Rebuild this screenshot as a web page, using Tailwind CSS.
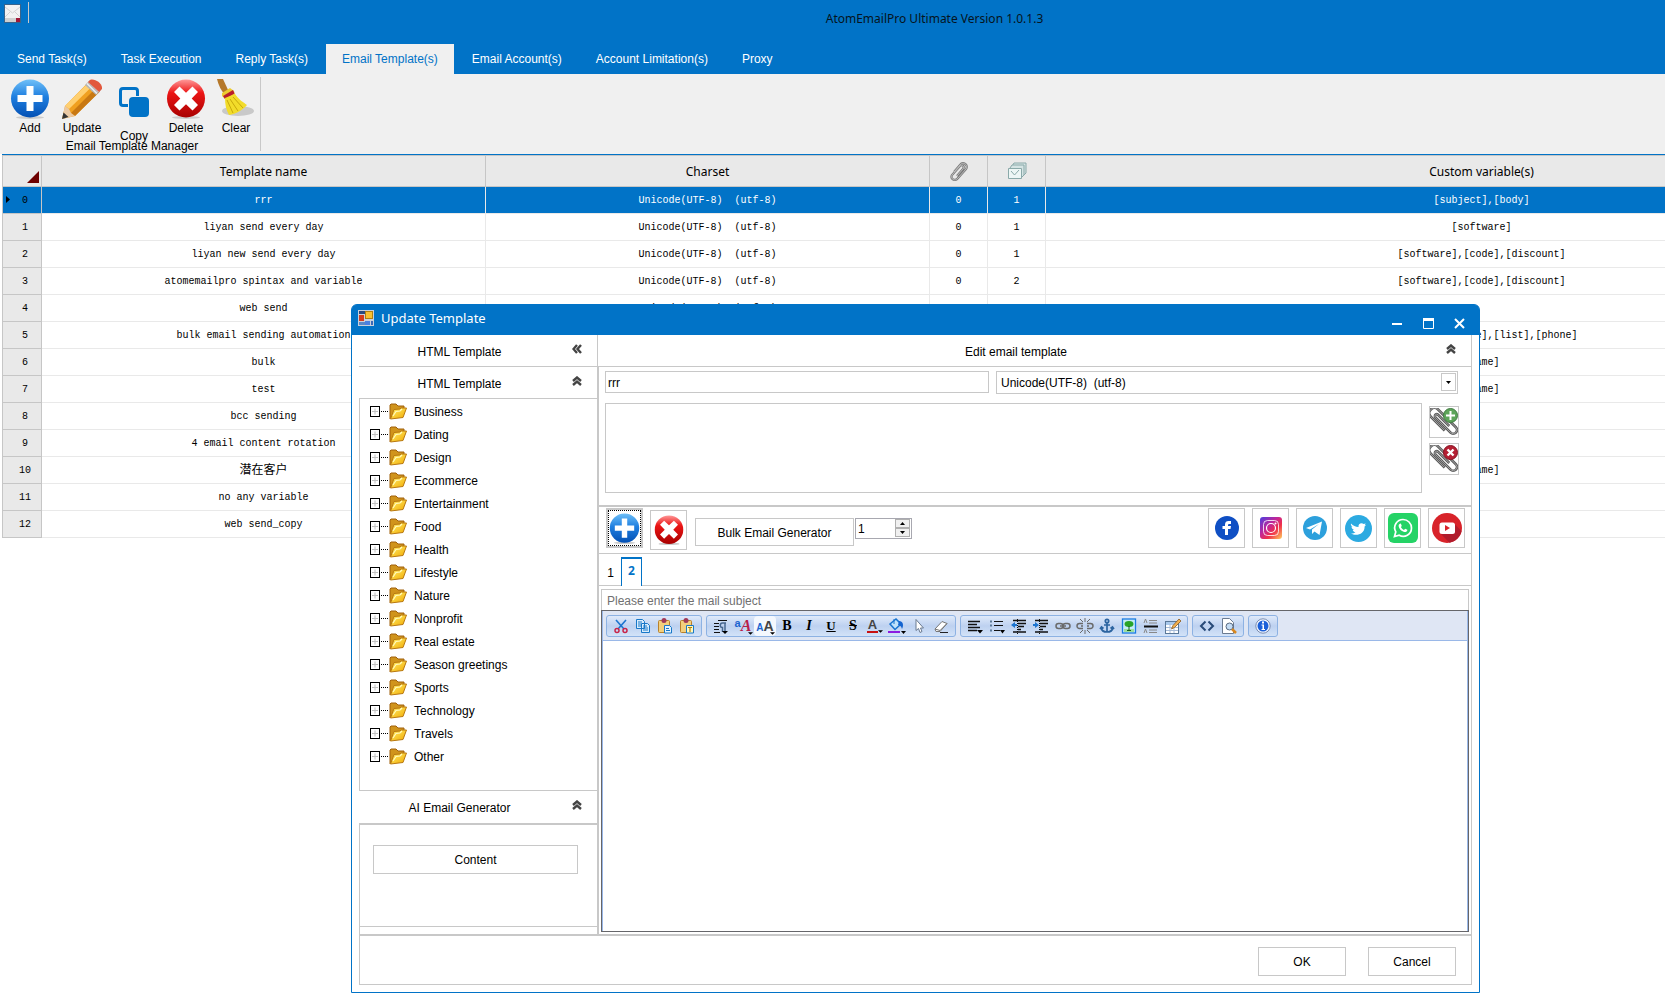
<!DOCTYPE html>
<html lang="en">
<head>
  <meta charset="UTF-8">
  <meta name="viewport" content="width=device-width, initial-scale=1.0">
  <title>AtomEmailPro Ultimate Version 1.0.1.3</title>
  <script src="https://cdn.jsdelivr.net/npm/@tailwindcss/browser@4"></script>
</head>
<body class="bg-white font-['Liberation_Sans',Arial,sans-serif] text-xs text-black">
  <!-- Shared icons -->
  <svg class="absolute size-0" aria-hidden="true">
    <defs>
      <linearGradient id="blue" x1="0" y1="0" x2="0" y2="1"><stop offset="0" stop-color="#6fc0f8"/><stop offset=".45" stop-color="#1f7fe0"/><stop offset="1" stop-color="#0450b4"/></linearGradient>
      <linearGradient id="red" x1="0" y1="0" x2="0" y2="1"><stop offset="0" stop-color="#f99"/><stop offset=".35" stop-color="#ec1515"/><stop offset="1" stop-color="#a80000"/></linearGradient>
      <linearGradient id="gold" x1="0" y1="0" x2="1" y2="1"><stop offset="0" stop-color="#fff06a"/><stop offset="1" stop-color="#f2a800"/></linearGradient>
      <linearGradient id="insta" x1="0" y1="0" x2="1" y2="1"><stop offset="0" stop-color="#4a3fe0"/><stop offset=".4" stop-color="#c0269a"/><stop offset=".65" stop-color="#f0304a"/><stop offset="1" stop-color="#ffd060"/></linearGradient>
    </defs>
    <symbol id="i-add" viewBox="0 0 40 40">
      <ellipse cx="20" cy="38.500" rx="14" ry="1.500" fill="#ccc"/>
      <circle cx="20" cy="19.500" r="19" fill="url(#blue)"/>
      <path d="M16.500 7h7v9h9v7h-9v9h-7v-9h-9v-7h9z" fill="#fff"/>
    </symbol>
    <symbol id="i-delete" viewBox="0 0 40 40">
      <ellipse cx="20" cy="38.500" rx="14" ry="1.500" fill="#ccc"/>
      <circle cx="20" cy="19.500" r="19" fill="url(#red)"/>
      <path d="M13.500 7.500l6.500 6.300 6.500-6.300 5.500 5.500-6.300 6.500L32 26l-5.500 5.500-6.500-6.300-6.500 6.300L8 26l6.300-6.500L8 13z" fill="#fff"/>
    </symbol>
    <symbol id="i-folder" viewBox="0 0 18 17">
      <path d="M1 16V2l1-1h5l2 2h6v3" fill="#d0941c" stroke="#a0600c"/>
      <path d="M1.500 16L5 6.500l6-.5 1-1h5.500L14 14.500z" fill="url(#gold)" stroke="#b87810"/>
      <path d="M4 13l3-4.500 4-.5 2-2" stroke="#fffbc0" stroke-width="1.200" fill="none"/>
    </symbol>
    <symbol id="i-clip" viewBox="0 0 30 30">
      <g transform="rotate(45 15 15)" fill="none">
        <path d="M22 21H1a5.500 5.500 0 010-11h27a4 4 0 010 8H5a2 2 0 010-4h17" stroke="#5a5a5a" stroke-width="2.800"/>
        <path d="M22 21H1a5.500 5.500 0 010-11h27a4 4 0 010 8H5a2 2 0 010-4h17" stroke="#a5a5a5"/>
      </g>
    </symbol>
    <symbol id="i-up" viewBox="0 0 10 10">
      <path d="M1 5l4-3.500L9 5M1 9l4-3.500L9 9" fill="none" stroke="#444" stroke-width="2.400"/>
    </symbol>
  </svg>

  <div class="relative flex h-screen min-h-[700px] flex-col overflow-hidden">
    <!-- Title bar -->
    <header class="bg-[#0173c7]">
      <div class="flex h-11 items-start">
        <svg class="mt-1 ml-1 h-[19px] w-[17px]" viewBox="0 0 17 19"><rect width="17" height="19" fill="#38648c"/><rect x="1" y="1" width="15" height="17" fill="#f2f2f2"/><path d="M1 3l7.500 6L16 3M1 13l5-5m10 5l-5-5" stroke="#d2d2d2" fill="none"/><path d="M1 14h11v4H1z" fill="#cfcfcf"/><path d="M12 14h4v4h-4z" fill="#a01838"/></svg>
        <div class="mt-[2px] ml-[7px] h-[21px] w-px bg-[#c8c8c8]"></div>
        <h1 class="grow pt-[11px] pl-[175px] text-center font-['Noto_Sans',sans-serif] text-xs text-[#061420]">AtomEmailPro Ultimate Version 1.0.1.3</h1>
      </div>
      <nav class="flex h-[30px] gap-[2px] pl-px text-white">
        <a href="#send" class="px-4 pt-[7px]">Send Task(s)</a>
        <a href="#execution" class="px-4 pt-[7px]">Task Execution</a>
        <a href="#reply" class="px-4 pt-[7px]">Reply Task(s)</a>
        <a href="#templates" class="bg-[#f0f0f0] px-4 pt-[7px] text-[#0173c7]">Email Template(s)</a>
        <a href="#accounts" class="px-4 pt-[7px]">Email Account(s)</a>
        <a href="#limitations" class="px-4 pt-[7px]">Account Limitation(s)</a>
        <a href="#proxy" class="px-4 pt-[7px]">Proxy</a>
      </nav>
    </header>

    <!-- Ribbon -->
    <div class="flex h-20 bg-[#f0f0f0]">
      <div class="pl-1">
        <div class="flex h-16 items-start">
          <button type="button" class="flex w-[52px] flex-col items-center gap-px pt-[5px]">
            <svg class="size-10"><use href="#i-add"/></svg>
            Add
          </button>
          <button type="button" class="flex w-[52px] flex-col items-center gap-px pt-[5px]">
            <svg class="size-10" viewBox="0 0 40 40">
              <path d="M0 40l3-13L27 2.500 38 12 13 37z" fill="#f0a020"/>
              <path d="M3 27L27 3l4 3.500L7 30z" fill="#ffd071"/>
              <path d="M9 34L34 9l4 3.500L13 37z" fill="#c87812"/>
              <path d="M0 40l3-13 4 3 2 4 4 3z" fill="#eac9a4"/><path d="M0 40l1.500-6.500L6.500 38z" fill="#333"/>
              <path d="M23 6l5-5 11 10-5 5z" fill="#b5b5b5"/><path d="M25 4.500l10 10M27 2.500l10 10" stroke="#eee" stroke-width="1.500"/>
              <path d="M28 1c5-2 13 4 12 9l-3 3L26 3z" fill="#e2583c"/>
            </svg>
            Update
          </button>
          <button type="button" class="flex w-[52px] flex-col items-center gap-[11px] pt-[13px]">
            <svg class="size-[30px]" viewBox="0 0 30 30"><rect x="1.500" y="1.500" width="17" height="17" rx="2.500" fill="none" stroke="#0173c7" stroke-width="3"/><rect x="9" y="9" width="21" height="21" rx="4" fill="#f0f0f0"/><rect x="10" y="10" width="20" height="20" rx="4" fill="#0173c7"/></svg>
            Copy
          </button>
          <button type="button" class="flex w-[52px] flex-col items-center gap-px pt-[5px]">
            <svg class="size-10"><use href="#i-delete"/></svg>
            Delete
          </button>
          <button type="button" class="flex w-12 flex-col items-center gap-px pt-[5px]">
            <svg class="size-10" viewBox="0 0 40 40">
              <ellipse cx="22" cy="32" rx="16" ry="5" fill="#c9c9c9"/>
              <path d="M1 0h6l6 13-4 3Q3 9 1 0z" fill="#b5782a"/>
              <path d="M6 14l8-5 4 3 1 4-10 4-3-3z" fill="#eccb30"/>
              <path d="M7 17l10-6 1.500 3.500L9 20z" fill="#b81c2c"/>
              <path d="M9 19l10-4c4 6 8 8 12 11-4 5-11 9-18 10-3-5-4-11-4-17z" fill="#f2dc2a"/>
              <path d="M11 21l6 13m-3-14l8 12m-5-14l10 11" stroke="#c8a80c" fill="none"/>
            </svg>
            Clear
          </button>
        </div>
        <div class="text-center">Email Template Manager</div>
      </div>
      <div class="my-[3px] w-px bg-[#c8c8c8]"></div>
    </div>

    <!-- Template grid -->
    <div class="ml-[2px] grow overflow-hidden border-t border-[#0173c7]">
      <table class="w-[1916px] table-fixed border-separate border-spacing-0 border-l border-[#c6c6c6] text-center">
        <thead class="font-['Noto_Sans',sans-serif]">
          <tr class="h-8 bg-[#e9e9e9]">
            <th class="w-[39px] border-y border-r border-[#c6c6c6] p-0">
              <svg class="mt-3 ml-6 size-3" viewBox="0 0 12 12"><path d="M12 0v12H0z" fill="#6e0000"/></svg>
            </th>
            <th class="w-[444px] border-y border-r border-[#c6c6c6] p-0 pt-[2px] font-normal">Template name</th>
            <th class="w-[444px] border-y border-r border-[#c6c6c6] p-0 pt-[2px] font-normal">Charset</th>
            <th class="w-[58px] border-y border-r border-[#c6c6c6] p-0">
              <svg class="mx-auto size-5" viewBox="0 0 20 20" fill="none"><path d="M5 11l6-7c3-4 9 0 6 4l-8 9c-3 4-8 1-6-3l8-9c2-2 5 0 3 3l-6 7" stroke="#777" stroke-width="2.200"/><path d="M5 11l6-7c3-4 9 0 6 4l-8 9c-3 4-8 1-6-3l8-9c2-2 5 0 3 3l-6 7" stroke="#ccc" stroke-width=".8"/></svg>
            </th>
            <th class="w-[58px] border-y border-r border-[#c6c6c6] p-0">
              <svg class="mx-auto size-5" viewBox="0 0 20 20"><path d="M5 5l2-3h12v10l-3 3" fill="#d5e4e4" stroke="#8aa9a9"/><path d="M3 7l2-3h12v10l-3 3" fill="#d5e4e4" stroke="#8aa9a9"/><path d="M1.500 7.500h13v10h-13z" fill="#edf6f5" stroke="#8aa9a9"/><path d="M4 10l3.500 4L12 9" fill="none" stroke="#8aa9a9"/></svg>
            </th>
            <th class="border-y border-r border-[#c6c6c6] p-0 pt-[2px] font-normal">Custom variable(s)</th>
          </tr>
        </thead>
        <tbody id="template-rows" class="font-['Liberation_Mono','Noto_Sans_CJK_SC',monospace] text-[10px]"></tbody>
      </table>
    </div>

    <!-- Update Template dialog -->
    <div role="dialog" aria-labelledby="dialog-title" class="absolute top-[304px] right-[185px] bottom-[2px] left-[351px] flex flex-col rounded-t-md border border-[#0173c7] bg-white">
      <div class="flex h-[30px] items-center rounded-t-sm bg-[#0173c7] pr-[14px] pl-[6px] text-white">
        <svg class="mb-1 size-4" viewBox="0 0 16 16"><rect width="16" height="16" fill="#c8d0dc"/><path d="M1 1h6v3H1z" fill="#284a80"/><path d="M1 12h6v3H1z" fill="#5a88c8"/><rect x="1" y="5" width="5" height="6" fill="#d43c1c"/><rect x="7.500" y="1.500" width="7" height="7" fill="#f8c030" stroke="#b08010"/><rect x="7" y="11" width="5" height="4" fill="#4a80e0"/><path d="M13 11h2v4h-2z" fill="#3a68b8"/></svg>
        <h2 id="dialog-title" class="grow pb-[2px] pl-[7px] font-['Noto_Sans',sans-serif] text-[13px]">Update Template</h2>
        <div class="flex gap-5 pt-[6px]">
          <button type="button" aria-label="Minimize"><svg class="size-[11px]" viewBox="0 0 11 11"><path d="M0 6h10" stroke="#fff" stroke-width="2"/></svg></button>
          <button type="button" aria-label="Maximize"><svg class="size-[11px]" viewBox="0 0 11 11"><path d="M.5 1v9.500h10V1" fill="none" stroke="#fff"/><path d="M0 1.500h11" stroke="#fff" stroke-width="3"/></svg></button>
          <button type="button" aria-label="Close"><svg class="size-[11px]" viewBox="0 0 11 11"><path d="M1 1l9 9M10 1l-9 9" stroke="#fff" stroke-width="2"/></svg></button>
        </div>
      </div>

      <div class="flex min-h-0 grow pr-[7px] pl-[7px]">
        <!-- Left panel -->
        <aside class="flex w-[238px] shrink-0 flex-col">
          <div class="flex h-8 shrink-0 items-center border-b border-[#c8c8c8] pr-[15px]">
            <span class="grow pt-[2px] pr-3 text-center">HTML Template</span>
            <svg class="mb-1 size-[10px] -rotate-90"><use href="#i-up"/></svg>
          </div>
          <div class="flex h-8 shrink-0 items-center border-b border-[#c8c8c8] pr-[15px]">
            <span class="grow pt-[2px] pr-3 text-center">HTML Template</span>
            <svg class="mb-1 size-[10px]"><use href="#i-up"/></svg>
          </div>
          <ul id="category-tree" class="min-h-0 grow overflow-hidden border-b border-l border-[#c8c8c8] pt-px pl-[10px]"></ul>
          <div class="flex h-[34px] shrink-0 items-center border-b-2 border-[#c8c8c8] pr-[15px]">
            <span class="grow pt-[2px] pr-3 text-center">AI Email Generator</span>
            <svg class="mb-1 size-[10px]"><use href="#i-up"/></svg>
          </div>
          <div class="h-[102px] shrink-0 border-b border-l border-[#c8c8c8] pt-5 pr-[19px] pl-[13px]">
            <button type="button" class="h-[29px] w-full border border-[#c8c8c8]">Content</button>
          </div>
          <div class="h-[7px] shrink-0 border-l border-[#c8c8c8]"></div>
        </aside>

        <!-- Right panel -->
        <main class="flex min-w-0 grow flex-col border-r border-l border-[#c8c8c8]">
          <div class="flex h-8 shrink-0 items-center border-b border-[#c8c8c8] pr-[15px]">
            <span class="grow pt-[2px] pr-3 text-center">Edit email template</span>
            <svg class="mb-1 size-[10px]"><use href="#i-up"/></svg>
          </div>

          <div class="flex min-h-0 grow flex-col border-l border-[#c8c8c8]">
            <div class="flex gap-[7px] pt-1 pr-[13px] pl-[6px]">
              <input type="text" aria-label="Template name" value="rrr" class="h-[22px] w-[384px] border border-[#c8c8c8] px-[2px] pt-px">
              <div class="relative grow">
                <select aria-label="Charset" class="h-[23px] w-full appearance-none border border-[#c8c8c8] bg-white px-1">
                  <option>Unicode(UTF-8)&nbsp; (utf-8)</option>
                </select>
                <svg class="pointer-events-none absolute top-[2px] right-[2px] h-[18px] w-[15px] border border-[#c8c8c8] bg-white" viewBox="0 0 13 16"><path d="M4 7h5L6.500 10z"/></svg>
              </div>
            </div>

            <div class="flex gap-[7px] border-b-2 border-[#c8c8c8] pt-[9px] pr-3 pb-3 pl-[6px]">
              <div class="h-[90px] grow border border-[#c8c8c8]"></div>
              <div class="flex flex-col gap-[5px] pt-[3px]">
                <button type="button" aria-label="Add attachment" class="relative h-8 w-[30px] border border-[#c8c8c8]">
                  <svg class="size-7"><use href="#i-clip"/></svg>
                  <svg class="absolute top-px right-0 size-[15px]" viewBox="0 0 15 15"><circle cx="7.500" cy="7.500" r="7" fill="#5da55a" stroke="#3f7a40"/><path d="M7.500 3v9M3 7.500h9" stroke="#fff" stroke-width="2"/></svg>
                </button>
                <button type="button" aria-label="Remove attachment" class="relative h-8 w-[30px] border border-[#c8c8c8]">
                  <svg class="size-7"><use href="#i-clip"/></svg>
                  <svg class="absolute top-px right-0 size-[15px]" viewBox="0 0 15 15"><circle cx="7.500" cy="7.500" r="7" fill="#b51f33" stroke="#841020"/><path d="M4.500 4.500l6 6m0-6l-6 6" stroke="#fff" stroke-width="2.400"/></svg>
                </button>
              </div>
            </div>

            <div class="flex h-[47px] shrink-0 items-start border-b border-[#c8c8c8] pt-px pr-[6px] pl-[7px]">
              <button type="button" aria-label="Add content" class="h-10 w-[37px] border-2 border-[#c8c8c8]">
                <span class="flex size-full items-center justify-center border border-dotted border-black"><svg class="size-[31px]"><use href="#i-add"/></svg></span>
              </button>
              <button type="button" aria-label="Delete content" class="mt-[2px] ml-[7px] flex h-10 w-[37px] items-center justify-center border border-[#c8c8c8]">
                <svg class="size-[30px]"><use href="#i-delete"/></svg>
              </button>
              <button type="button" class="mt-[10px] ml-2 h-7 w-[159px] border border-[#c8c8c8] pt-px">Bulk Email Generator</button>
              <div class="mt-[10px] ml-px flex h-[21px] w-[57px] border border-[#a8a8b0] pr-px">
                <input type="number" aria-label="Count" value="1" class="min-w-0 grow pl-[2px] [appearance:textfield] [&::-webkit-inner-spin-button]:appearance-none">
                <div class="flex w-[15px] shrink-0 flex-col">
                  <button type="button" aria-label="Increase" class="flex h-[9px] items-center justify-center border border-[#b0b0b0] bg-[#f0f0f0]"><svg class="h-[3px] w-[5px]" viewBox="0 0 5 3"><path d="M0 3h5L2.500 0z"/></svg></button>
                  <button type="button" aria-label="Decrease" class="flex h-[9px] items-center justify-center border border-[#b0b0b0] bg-[#f0f0f0]"><svg class="h-[3px] w-[5px]" viewBox="0 0 5 3"><path d="M0 0h5L2.500 3z"/></svg></button>
                </div>
              </div>
              <div class="ml-auto flex gap-[7px]">
                <button type="button" aria-label="Facebook" class="flex h-10 w-[37px] items-center justify-center border border-[#c8c8c8]">
                  <svg class="size-6" viewBox="0 0 24 24"><circle cx="12" cy="12" r="12" fill="#0f4fc4"/><path d="M10 19v-6H7.500v-3H10V8.500C10 6 11.500 5 13.500 5H16v3h-1.500c-1 0-1.500.5-1.500 1.200V10h3l-.5 3H13v6z" fill="#fff"/></svg>
                </button>
                <button type="button" aria-label="Instagram" class="flex h-10 w-[37px] items-center justify-center border border-[#c8c8c8]">
                  <svg class="size-[22px]" viewBox="0 0 22 22"><rect width="22" height="22" rx="3" fill="url(#insta)"/><rect x="3.500" y="3.500" width="15" height="15" rx="4" fill="none" stroke="#fff" stroke-opacity=".8"/><circle cx="11" cy="11" r="4.500" fill="none" stroke="#fff" stroke-width="1.200"/><circle cx="15.500" cy="6.500" r="1" fill="#fff"/></svg>
                </button>
                <button type="button" aria-label="Telegram" class="flex h-10 w-[37px] items-center justify-center border border-[#c8c8c8]">
                  <svg class="size-6" viewBox="0 0 24 24"><circle cx="12" cy="12" r="12" fill="#2da0dc"/><path d="M3 12l16-6.500L16.500 19l-5-3.500-2.500 2.500v-4.500L16 8l-9 5.500z" fill="#fff"/></svg>
                </button>
                <button type="button" aria-label="Twitter" class="flex h-10 w-[37px] items-center justify-center border border-[#c8c8c8]">
                  <svg class="size-[27px]" viewBox="0 0 27 27"><circle cx="13.500" cy="13.500" r="13.500" fill="#2caae1"/><path d="M6 8.500c2 2.300 4.500 3.500 7.500 3.600-.6-3 2.800-5 5.200-3l2-.6-1 1.700 1.500-.4-1.600 1.700c.2 8-8.600 10-13.600 7 1.800.1 3.300-.4 4.500-1.300-1.500-.2-2.400-1-2.800-2.200h1.300C7.400 14.300 6.500 13 6.500 11.600l1.300.4C6.200 11 5.500 9.500 6 8.500z" fill="#fff"/></svg>
                </button>
                <button type="button" aria-label="WhatsApp" class="flex h-10 w-[37px] items-center justify-center border border-[#c8c8c8]">
                  <svg class="size-[30px]" viewBox="0 0 30 30"><rect width="30" height="30" rx="6" fill="#25d366"/><path d="M6.500 23.500l1.300-4.700C4.500 13 9 6.500 15 6.500c4.800 0 8.500 3.800 8.500 8.500 0 6.500-7 10.500-12.300 7.200z" fill="none" stroke="#fff" stroke-width="1.700"/><path d="M11.500 11c1-1 1.700-.5 1.700.4l.6 1.500-.9 1.200c.7 1.400 1.800 2.300 3.100 2.900l1.200-1.200 2.200 1c0 1.900-1.800 2.500-3.300 2.200-2.700-.6-5.300-3.500-5.500-6.200 0-.8.300-1.300.9-1.800z" fill="#fff"/></svg>
                </button>
                <button type="button" aria-label="YouTube" class="flex h-10 w-[37px] items-center justify-center border border-[#c8c8c8]">
                  <svg class="size-[30px]" viewBox="0 0 30 30"><circle cx="15" cy="15" r="15" fill="#d8232a"/><path d="M22 10.500l7.500 7.500c-1.500 6-6 10.500-12 11.700L8 20z" fill="#b01c2c"/><rect x="7.500" y="9.500" width="15.500" height="11.500" rx="2.500" fill="#fff"/><path d="M13 12v6l5-3z" fill="#d8232a"/></svg>
                </button>
              </div>
            </div>

            <!-- Content tabs -->
            <div class="flex h-8 shrink-0 items-end border-b border-[#c8c8c8]">
              <button type="button" class="h-[26px] w-[22px] pt-px pl-px">1</button>
              <button type="button" class="-mb-px h-[29px] w-[21px] border-x border-t-2 border-[#0173c7] bg-white pb-[3px] font-['Open_Sans',sans-serif] font-bold text-[#0173c7]">2</button>
            </div>

            <div class="flex min-h-0 grow flex-col px-[2px] pt-[3px] pb-[2px]">
              <input type="text" aria-label="Mail subject" placeholder="Please enter the mail subject" class="h-[21px] shrink-0 border border-b-0 border-[#c8c8c8] px-[5px] pt-px placeholder:text-[#707070]">
              <div class="flex min-h-0 grow flex-col border border-[#66666a]">
                <div class="flex h-[30px] shrink-0 gap-1 border-x border-b border-[#9ab8e8] bg-[#dfe6f4] px-[3px] pt-1">
                  <div class="flex h-[22px] items-center rounded-[3px] border border-[#8db2e3] bg-linear-to-b from-[#dfeafa] via-[#bdd1f0] to-[#d3e3f8] px-[3px]">
                    <button type="button" aria-label="Cut" class="w-[22px] px-[3px]"><svg class="size-4" viewBox="0 0 16 16" fill="none"><path d="M3 2l8 9M13 2l-8 9" stroke="#1c74d0" stroke-width="1.600"/><circle cx="4" cy="12.500" r="2" stroke="#c8244a" stroke-width="1.500"/><circle cx="12" cy="12.500" r="2" stroke="#c8244a" stroke-width="1.500"/></svg></button>
                    <button type="button" aria-label="Copy" class="w-[22px] px-[3px]"><svg class="size-4" viewBox="0 0 16 16" fill="#d8ecfc" stroke="#1878c8"><path d="M1.500 1.500h6l2 2v7h-8zM6.500 5.500h6l2 2v7h-8z"/><path d="M3 4h4M3 6h3M3 8h3M8 8h4M8 10h5M8 12h5"/></svg></button>
                    <button type="button" aria-label="Paste" class="w-[22px] px-[3px]"><svg class="size-4" viewBox="0 0 16 16"><rect x="1.500" y="2.500" width="11" height="12" rx="1" fill="#f3cf7c" stroke="#b8812c"/><circle cx="7" cy="2.500" r="2.500" fill="#a03a58"/><path d="M7.500 7.500h5l2 2v5.500h-7z" fill="#e2f2ff" stroke="#1878c8"/><path d="M9 10.500h3M9 12.500h4" stroke="#1878c8"/></svg></button>
                    <button type="button" aria-label="Paste as text" class="w-[22px] px-[3px]"><svg class="size-4" viewBox="0 0 16 16"><rect x="1.500" y="2.500" width="11" height="12" rx="1" fill="#f3cf7c" stroke="#b8812c"/><circle cx="7" cy="2.500" r="2.500" fill="#a03a58"/><path d="M7.500 7.500h7v7.500h-7z" fill="#fff9c0" stroke="#1878c8"/><path d="M9 9.500h4M11 9.500V14" stroke="#b88000" stroke-width="1.200"/></svg></button>
                  </div>
                  <div class="flex h-[22px] items-center rounded-[3px] border border-[#8db2e3] bg-linear-to-b from-[#dfeafa] via-[#bdd1f0] to-[#d3e3f8] px-[3px]">
                    <button type="button" aria-label="Paragraph format" class="w-[22px] px-[3px]"><svg class="size-4" viewBox="0 0 16 16"><path d="M1 5.500h5M1 8.500h5M1 11.500h5M1 14.500h6M5 2.500h9" stroke="#111"/><path d="M13 5H9.500a2.200 2.200 0 000 4.500V14M12 5v8" fill="none" stroke="#486890" stroke-width="1.500"/><path d="M9 13h6l-3 3z"/></svg></button>
                    <button type="button" aria-label="Font family" class="relative flex w-[22px] items-start justify-center font-['Liberation_Serif',serif] text-base leading-4 font-bold"><span class="font-['Liberation_Sans',sans-serif] text-[11px] leading-[11px] text-[#1c64d0]">a</span><span class="text-[#b82048] italic">A</span><svg class="absolute right-px -bottom-px h-[3px] w-[5px]" viewBox="0 0 6 3"><path d="M0 0h6L3 3z"/></svg></button>
                    <button type="button" aria-label="Font size" class="relative flex h-5 w-[22px] items-center justify-center rounded-sm bg-[#f4f8fe] text-sm leading-4 font-bold"><span class="self-end text-[10px] leading-4 text-[#1c64d0]">A</span><span class="text-[#444]">A</span><svg class="absolute right-px bottom-px h-[3px] w-[5px]" viewBox="0 0 6 3"><path d="M0 0h6L3 3z"/></svg></button>
                    <button type="button" aria-label="Bold" class="w-[22px] font-['Liberation_Serif',serif] text-sm leading-4 font-bold">B</button>
                    <button type="button" aria-label="Italic" class="w-[22px] font-['Liberation_Serif',serif] text-sm leading-4 font-bold italic">I</button>
                    <button type="button" aria-label="Underline" class="w-[22px] font-['Liberation_Serif',serif] text-[13px] leading-4 font-bold underline">U</button>
                    <button type="button" aria-label="Strikethrough" class="w-[22px] font-['Liberation_Serif',serif] text-sm leading-4 font-bold line-through">S</button>
                    <button type="button" aria-label="Text colour" class="flex w-[22px] items-end justify-center text-[13px] font-bold text-[#444]"><span class="border-b-2 border-[#c81010] px-px leading-3">A</span><svg class="h-[3px] w-[5px]" viewBox="0 0 6 3"><path d="M0 0h6L3 3z"/></svg></button>
                    <button type="button" aria-label="Highlight colour" class="w-[22px] px-[2px]"><svg class="h-4 w-[18px]" viewBox="0 0 18 16"><path d="M2 6l6-5 5 5-6 5.500z" fill="#bfe2fb" stroke="#1874d0" stroke-width="1.500"/><path d="M6 1v5" stroke="#1874d0"/><path d="M11 3c4 0 5 4 3 8-1-3-2-4-4-4z" fill="#1464d0"/><path d="M0 13h12v2H0z" fill="#8c1ce0"/><path d="M13 13h5l-2.500 3z"/></svg></button>
                    <button type="button" aria-label="Select" class="w-[22px] px-[3px]"><svg class="size-4" viewBox="0 0 16 16"><path d="M5 1.500v11l2.500-2 1.500 4 2-1-1.500-3.500h3z" fill="#fff" stroke="#6a7a90"/></svg></button>
                    <button type="button" aria-label="Erase formatting" class="w-[22px] px-[3px]"><svg class="size-4" viewBox="0 0 16 16"><path d="M2 11l7-7.500 5 2-7 8H3z" fill="#fff" stroke="#777"/><path d="M2 11l5 1.500L14 5.500" fill="none" stroke="#777"/><path d="M7 14.500h8" stroke="#222"/></svg></button>
                  </div>
                  <div class="flex h-[22px] items-center rounded-[3px] border border-[#8db2e3] bg-linear-to-b from-[#dfeafa] via-[#bdd1f0] to-[#d3e3f8] px-[3px]">
                    <button type="button" aria-label="Align" class="w-[22px] px-[3px]"><svg class="size-4" viewBox="0 0 16 16"><path d="M1 3.500h12M1 6.500h9M1 9.500h12M1 12.500h9" stroke="#111" stroke-width="1.400"/><path d="M10 12h6l-3 3.500z"/></svg></button>
                    <button type="button" aria-label="List" class="w-[22px] px-[3px]"><svg class="size-4" viewBox="0 0 16 16"><path d="M5 3.500h9M5 7.500h9M5 12.500h6" stroke="#111" stroke-width="1.200"/><path d="M1 2.500h2v2H1zM1 6.500h2v2H1zM1 11.500h2v2H1z" fill="#5a7898"/><path d="M11 12h5l-2.500 3.500z"/></svg></button>
                    <button type="button" aria-label="Outdent" class="w-[22px] px-[3px]"><svg class="size-4" viewBox="0 0 16 16"><path d="M2 2.500h13M7 5.500h8M7 8.500h6M7 11.500h3M2 14h13" stroke="#111" stroke-width="1.500"/><path d="M6.500 1v15" stroke="#111" stroke-dasharray="1 1"/><path d="M0 7l4-3v2h2v2H4v2z" fill="#1c74d0"/></svg></button>
                    <button type="button" aria-label="Indent" class="w-[22px] px-[3px]"><svg class="size-4" viewBox="0 0 16 16"><path d="M2 2.500h13M7 5.500h8M7 8.500h6M7 11.500h3M2 14h13" stroke="#111" stroke-width="1.500"/><path d="M6.500 1v15" stroke="#111" stroke-dasharray="1 1"/><path d="M6 7L2 4v2H0v2h2v2z" fill="#1c74d0"/></svg></button>
                    <button type="button" aria-label="Link" class="w-[22px] px-[3px]"><svg class="size-4" viewBox="0 0 16 16" fill="none" stroke="#6a6a6a" stroke-width="1.500"><rect x="1" y="5.500" width="7" height="5" rx="2.500"/><rect x="8" y="5.500" width="7" height="5" rx="2.500"/><path d="M5 8h6"/></svg></button>
                    <button type="button" aria-label="Unlink" class="w-[22px] px-[2px]"><svg class="h-4 w-[18px]" viewBox="0 0 18 16" fill="none" stroke="#6a6a6a" stroke-width="1.500"><path d="M7 5.500H3.500a2.500 2.500 0 000 5H7M11 5.500h3.500a2.500 2.500 0 010 5H11M5 8h2M11 8h2"/><path d="M9 0v4M4 1l3 3M14 1l-3 3M9 12v4M4 15l3-3M14 15l-3-3" stroke-width="1"/></svg></button>
                    <button type="button" aria-label="Anchor" class="w-[22px] px-[3px]"><svg class="size-4" viewBox="0 0 16 16" fill="none" stroke="#2c64a0" stroke-width="1.700"><circle cx="8" cy="3" r="1.700"/><path d="M8 5v9M5 7h6M2 9.500c.5 3 3 4.500 6 4.500s5.500-1.500 6-4.500M1 11l1.500-2 2 1.500M15 11l-1.500-2-2 1.500"/></svg></button>
                    <button type="button" aria-label="Image" class="w-[22px] px-[3px]"><svg class="size-4" viewBox="0 0 16 16"><rect x="1.500" y="1" width="13" height="14" fill="#c4ecf8" stroke="#1c7ce0" stroke-width="1.300"/><path d="M3 11h10v3H3z" fill="#9ce0a0"/><ellipse cx="8" cy="6" rx="4.500" ry="3" fill="#28a428"/><path d="M8 8v4M6 12.500h4" stroke="#14601c"/></svg></button>
                    <button type="button" aria-label="Page break" class="w-[22px] px-[3px]"><svg class="size-4" viewBox="0 0 16 16"><path d="M1 5l1.500-4L4 5M1 15l1.500-4L4 15M6 2.500h8M6 5h8M6 12h8M6 14.500h8" fill="none" stroke="#888"/><path d="M1 8.500h14" stroke="#111" stroke-width="2"/></svg></button>
                    <button type="button" aria-label="Form" class="w-[22px] px-[3px]"><svg class="size-4" viewBox="0 0 16 16"><rect x=".5" y="3.500" width="13" height="12" fill="#fff" stroke="#5a7898"/><path d="M1 4h12v3H1z" fill="#a8c8ec"/><path d="M1 9.500h12M1 12.500h12M5 6v9M9 6v9" stroke="#a8bcd8"/><path d="M6.500 11L8 7.500 14 1l2 2-6.500 6.500z" fill="#f2b050" stroke="#8a5a20" stroke-width=".8"/></svg></button>
                  </div>
                  <div class="flex h-[22px] items-center rounded-[3px] border border-[#8db2e3] bg-linear-to-b from-[#dfeafa] via-[#bdd1f0] to-[#d3e3f8] px-[3px]">
                    <button type="button" aria-label="Source" class="w-[22px] px-[3px]"><svg class="size-4" viewBox="0 0 16 16" fill="none" stroke="#284a78" stroke-width="2"><path d="M6.500 3.500L2 8l4.500 4.500M9.500 3.500L14 8l-4.500 4.500"/></svg></button>
                    <button type="button" aria-label="Preview" class="w-[22px] px-[3px]"><svg class="size-4" viewBox="0 0 16 16"><path d="M1.500.5h7l4 4v11h-11z" fill="#fff" stroke="#6a7a90"/><circle cx="8.500" cy="8.500" r="3.500" fill="#c4dcf4" stroke="#5a6a80"/><path d="M11 11l4 4" stroke="#d88820" stroke-width="2.500"/></svg></button>
                  </div>
                  <div class="flex h-[22px] items-center rounded-[3px] border border-[#8db2e3] bg-linear-to-b from-[#dfeafa] via-[#bdd1f0] to-[#d3e3f8] px-[3px]">
                    <button type="button" aria-label="About" class="w-[22px] px-[3px]"><svg class="size-4" viewBox="0 0 16 16"><circle cx="8" cy="8" r="7.200" fill="#f4f8ff" stroke="#7a8cb0"/><circle cx="8" cy="8" r="5.500" fill="#1c60d8"/><path d="M7 3.500h2v2H7zM6.500 6.500H9V11h1v1H6.500v-1h1V7.500h-1z" fill="#fff"/></svg></button>
                  </div>
                </div>
                <textarea aria-label="Mail body" class="grow resize-none border-x border-[#9ab8e8]"></textarea>
              </div>
            </div>
          </div>
        </main>
      </div>

      <!-- Dialog footer -->
      <div class="mx-[7px] mb-[7px] flex h-[51px] shrink-0 justify-end gap-[22px] border border-t-2 border-[#c8c8c8] pt-[11px] pr-[15px]">
        <button type="button" class="h-[29px] w-[88px] border border-[#c8c8c8]">OK</button>
        <button type="button" class="h-[29px] w-[88px] border border-[#c8c8c8]">Cancel</button>
      </div>
    </div>
  </div>

  <script>
    const templates = [
      { name: 'rrr', mails: 1, vars: '[subject],[body]' },
      { name: 'liyan send every day', mails: 1, vars: '[software]' },
      { name: 'liyan new send every day', mails: 1, vars: '[software],[code],[discount]' },
      { name: 'atomemailpro spintax and variable', mails: 2, vars: '[software],[code],[discount]' },
      { name: 'web send', mails: 1, vars: '' },
      { name: 'bulk email sending automation', mails: 1, vars: '[software],[name],[list],[phone]' },
      { name: 'bulk', mails: 1, vars: '[name]' },
      { name: 'test', mails: 1, vars: '[name]' },
      { name: 'bcc sending', mails: 1, vars: '' },
      { name: '4 email content rotation', mails: 1, vars: '' },
      { name: '<span class="text-xs">潜在客户</span>', mails: 1, vars: '[name]' },
      { name: 'no any variable', mails: 1, vars: '' },
      { name: 'web send_copy', mails: 1, vars: '' },
    ];

    const categories = ['Business', 'Dating', 'Design', 'Ecommerce', 'Entertainment', 'Food', 'Health', 'Lifestyle',
      'Nature', 'Nonprofit', 'Real estate', 'Season greetings', 'Sports', 'Technology', 'Travels', 'Other'];

    const selected = 0;

    document.getElementById('template-rows').innerHTML = templates
      .map((t, i) => {
        const cell = i === selected
          ? 'border-r border-b border-[#e9e9e9] bg-[#0173c7] p-0 pt-[2px] text-white'
          : 'border-r border-b border-[#e9e9e9] p-0 pt-[2px]';
        const head = i === selected
          ? 'relative border-r border-b border-[#c6c6c6] bg-[#0173c7] p-0 pt-[2px] pl-[6px] font-normal'
          : 'relative border-r border-b border-[#c6c6c6] bg-[#e9e9e9] p-0 pt-[2px] pl-[6px] font-normal';
        const arrow = i === selected
          ? '<svg class="absolute top-[9px] left-[3px] h-[7px] w-1" viewBox="0 0 4 7"><path d="M0 0v7l4-3.500z"/></svg>'
          : '';
        return `
          <tr class="h-[27px]">
            <th scope="row" class="${head}">${arrow}${i}</th>
            <td class="${cell}">${t.name}</td>
            <td class="${cell}">Unicode(UTF-8)&nbsp; (utf-8)</td>
            <td class="${cell}">0</td>
            <td class="${cell}">${t.mails}</td>
            <td class="${cell}">${t.vars}</td>
          </tr>`;
      })
      .join('');

    document.getElementById('category-tree').innerHTML = categories
      .map((name) => `
        <li class="flex h-[23px] items-center">
          <svg class="h-[11px] w-[18px]" viewBox="0 0 18 11"><rect x=".5" y=".5" width="9" height="10" fill="#fff" stroke="#000"/><path d="M2 5.500h6M5 2.500v6" stroke="#c0c0c0"/><path d="M11 5.500h7" stroke="#000" stroke-dasharray="1 1"/></svg>
          <svg class="mr-[7px] ml-px h-[17px] w-[18px]"><use href="#i-folder"/></svg>
          ${name}
        </li>`)
      .join('');
  </script>
</body>
</html>
